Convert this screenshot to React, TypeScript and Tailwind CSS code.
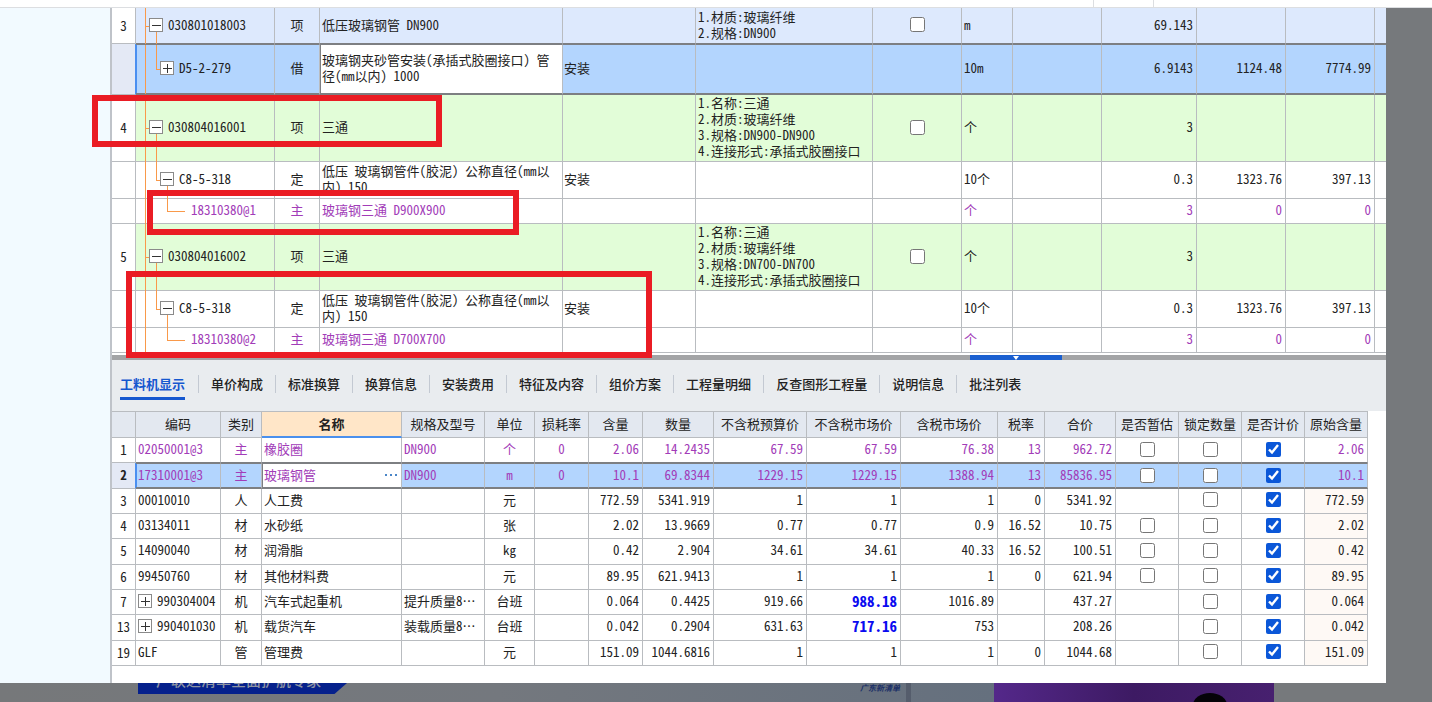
import { useState } from 'react';
import { clsx } from 'clsx';

interface BillRow {
  no?: string;
  level: 1 | 2 | 3;
  code: string;
  open?: boolean;
  kind: string;
  name: string;
  major?: string;
  feature?: string;
  unit: string;
  qty: string;
  price?: string;
  total?: string;
  height: string;
  bg: string;
  selected?: boolean;
  beforeSelected?: boolean;
}

interface ResourceRow {
  no: string;
  code: string;
  expandable?: boolean;
  kind: string;
  name: string;
  spec?: string;
  unit: string;
  loss?: string;
  content: string;
  qty: string;
  budget: string;
  market: string;
  taxMarket: string;
  rate?: string;
  total: string;
  estimate: boolean;
  origin: string;
  purple?: boolean;
  selected?: boolean;
  beforeSelected?: boolean;
  changed?: boolean;
}

const billCols = [
  'w-[24px]', 'w-[139px]', 'w-[45px]', 'w-[243px]', 'w-[133px]', 'w-[177px]', 'w-[89px]',
  'w-[51px]', 'w-[89px]', 'w-[95px]', 'w-[89px]', 'w-[89px]', 'w-[11px]',
];

const GREEN = 'bg-[#e2fdd8]';

const billRows: BillRow[] = [
  {
    no: '3', level: 1, code: '030801018003', open: true, kind: '项', name: '低压玻璃钢管 DN900',
    feature: '1.材质:玻璃纤维\n2.规格:DN900', unit: 'm', qty: '69.143',
    height: 'h-[36px]', bg: 'bg-[#dde9fd]', beforeSelected: true,
  },
  {
    level: 2, code: 'D5-2-279', open: false, kind: '借', name: '玻璃钢夹砂管安装(承插式胶圈接口) 管径(mm以内) 1000',
    major: '安装', unit: '10m', qty: '6.9143', price: '1124.48', total: '7774.99',
    height: 'h-[51px]', bg: 'bg-[#b3d5fe]', selected: true,
  },
  {
    no: '4', level: 1, code: '030804016001', open: true, kind: '项', name: '三通',
    feature: '1.名称:三通\n2.材质:玻璃纤维\n3.规格:DN900-DN900\n4.连接形式:承插式胶圈接口',
    unit: '个', qty: '3', height: 'h-[67px]', bg: GREEN,
  },
  {
    level: 2, code: 'C8-5-318', open: true, kind: '定', name: '低压 玻璃钢管件(胶泥) 公称直径(mm以内) 150',
    major: '安装', unit: '10个', qty: '0.3', price: '1323.76', total: '397.13',
    height: 'h-[37px]', bg: 'bg-white',
  },
  {
    level: 3, code: '18310380@1', kind: '主', name: '玻璃钢三通 D900X900', unit: '个',
    qty: '3', price: '0', total: '0', height: 'h-[25px]', bg: 'bg-white',
  },
  {
    no: '5', level: 1, code: '030804016002', open: true, kind: '项', name: '三通',
    feature: '1.名称:三通\n2.材质:玻璃纤维\n3.规格:DN700-DN700\n4.连接形式:承插式胶圈接口',
    unit: '个', qty: '3', height: 'h-[67px]', bg: GREEN,
  },
  {
    level: 2, code: 'C8-5-318', open: true, kind: '定', name: '低压 玻璃钢管件(胶泥) 公称直径(mm以内) 150',
    major: '安装', unit: '10个', qty: '0.3', price: '1323.76', total: '397.13',
    height: 'h-[37px]', bg: 'bg-white',
  },
  {
    level: 3, code: '18310380@2', kind: '主', name: '玻璃钢三通 D700X700', unit: '个',
    qty: '3', price: '0', total: '0', height: 'h-[25px]', bg: 'bg-white',
  },
];

const tabs = [
  '工料机显示', '单价构成', '标准换算', '换算信息', '安装费用', '特征及内容',
  '组价方案', '工程量明细', '反查图形工程量', '说明信息', '批注列表',
];

const resourceCols = [
  { title: '', width: 'w-[24px]' },
  { title: '编码', width: 'w-[85px]' },
  { title: '类别', width: 'w-[41px]' },
  { title: '名称', width: 'w-[140px]' },
  { title: '规格及型号', width: 'w-[83px]' },
  { title: '单位', width: 'w-[50px]' },
  { title: '损耗率', width: 'w-[54px]' },
  { title: '含量', width: 'w-[54px]' },
  { title: '数量', width: 'w-[71px]' },
  { title: '不含税预算价', width: 'w-[93px]' },
  { title: '不含税市场价', width: 'w-[94px]' },
  { title: '含税市场价', width: 'w-[97px]' },
  { title: '税率', width: 'w-[47px]' },
  { title: '合价', width: 'w-[71px]' },
  { title: '是否暂估', width: 'w-[63px]' },
  { title: '锁定数量', width: 'w-[63px]' },
  { title: '是否计价', width: 'w-[63px]' },
  { title: '原始含量', width: 'w-[63px]' },
];

const resourceRows: ResourceRow[] = [
  { no: '1', code: '02050001@3', kind: '主', name: '橡胶圈', spec: 'DN900', unit: '个', loss: '0', content: '2.06', qty: '14.2435', budget: '67.59', market: '67.59', taxMarket: '76.38', rate: '13', total: '962.72', estimate: true, origin: '2.06', purple: true, beforeSelected: true },
  { no: '2', code: '17310001@3', kind: '主', name: '玻璃钢管', spec: 'DN900', unit: 'm', loss: '0', content: '10.1', qty: '69.8344', budget: '1229.15', market: '1229.15', taxMarket: '1388.94', rate: '13', total: '85836.95', estimate: true, origin: '10.1', purple: true, selected: true },
  { no: '3', code: '00010010', kind: '人', name: '人工费', unit: '元', content: '772.59', qty: '5341.919', budget: '1', market: '1', taxMarket: '1', rate: '0', total: '5341.92', estimate: false, origin: '772.59' },
  { no: '4', code: '03134011', kind: '材', name: '水砂纸', unit: '张', content: '2.02', qty: '13.9669', budget: '0.77', market: '0.77', taxMarket: '0.9', rate: '16.52', total: '10.75', estimate: true, origin: '2.02' },
  { no: '5', code: '14090040', kind: '材', name: '润滑脂', unit: 'kg', content: '0.42', qty: '2.904', budget: '34.61', market: '34.61', taxMarket: '40.33', rate: '16.52', total: '100.51', estimate: true, origin: '0.42' },
  { no: '6', code: '99450760', kind: '材', name: '其他材料费', unit: '元', content: '89.95', qty: '621.9413', budget: '1', market: '1', taxMarket: '1', rate: '0', total: '621.94', estimate: true, origin: '89.95' },
  { no: '7', code: '990304004', expandable: true, kind: '机', name: '汽车式起重机', spec: '提升质量8⋯', unit: '台班', content: '0.064', qty: '0.4425', budget: '919.66', market: '988.18', taxMarket: '1016.89', total: '437.27', estimate: false, origin: '0.064', changed: true },
  { no: '13', code: '990401030', expandable: true, kind: '机', name: '载货汽车', spec: '装载质量8⋯', unit: '台班', content: '0.042', qty: '0.2904', budget: '631.63', market: '717.16', taxMarket: '753', total: '208.26', estimate: false, origin: '0.042', changed: true },
  { no: '19', code: 'GLF', kind: '管', name: '管理费', unit: '元', content: '151.09', qty: '1044.6816', budget: '1', market: '1', taxMarket: '1', rate: '0', total: '1044.68', estimate: false, origin: '151.09' },
];

function Toggle({ open, label }: { open?: boolean; label: string }) {
  return (
    <button type="button" aria-label={label} className="relative size-[14px] shrink-0 border border-[#8a8a8a] bg-white">
      <svg viewBox="0 0 12 12" className="block size-[12px]" stroke="#333" strokeWidth="1" fill="none">
        <path d="M2 6.5h9" />
        {!open && <path d="M6.5 2v9" />}
      </svg>
    </button>
  );
}

function Check({ label, checked }: { label: string; checked?: boolean }) {
  return (
    <input
      type="checkbox"
      aria-label={label}
      defaultChecked={checked}
      className="mx-auto block size-[15px] accent-[#0b57d8]"
    />
  );
}

function TreeCell({ row }: { row: BillRow }) {
  const line = 'absolute bg-[#f9994a]';
  return (
    <>
      {/* Trunk and branch guides */}
      <span className={clsx(line, 'left-[9px] top-0 -bottom-px w-px')} />
      {row.level === 1 && (
        <>
          <span className={clsx(line, 'left-[9px] top-1/2 h-px w-[4px]')} />
          <span className={clsx(line, 'left-[20px] top-1/2 -bottom-px w-px')} />
        </>
      )}
      {row.level === 2 && (
        <>
          <span className={clsx(line, 'left-[20px] top-0 bottom-1/2 w-px')} />
          <span className={clsx(line, 'left-[20px] top-1/2 h-px w-[4px]')} />
          {row.open && <span className={clsx(line, 'left-[31px] top-1/2 -bottom-px w-px')} />}
        </>
      )}
      {row.level === 3 && (
        <>
          <span className={clsx(line, 'left-[31px] top-0 bottom-1/2 w-px')} />
          <span className={clsx(line, 'left-[31px] top-1/2 h-px w-[18px]')} />
        </>
      )}
      <div
        className={clsx(
          'flex items-center gap-[5px]',
          row.level === 1 && 'pl-[13px]',
          row.level === 2 && 'pl-[24px]',
          row.level === 3 && 'pl-[55px]',
        )}
      >
        {row.level < 3 && <Toggle open={row.open} label={`展开 ${row.code}`} />}
        <span>{row.code}</span>
      </div>
    </>
  );
}

function BillTable() {
  return (
    <table className="w-full table-fixed border-separate border-spacing-0">
      <colgroup>
        {billCols.map((w, i) => (
          <col key={i} className={w} />
        ))}
      </colgroup>
      <tbody>
        {billRows.map((row, i) => {
          const cell = clsx(
            'border-r border-r-[#b9bcc0] p-0 pb-[2px]',
            row.bg,
            row.selected && 'border-t border-b-2 border-t-[#7d7f82] border-b-[#7d7f82]',
            row.beforeSelected && 'border-b border-b-[#7d7f82]',
            !row.selected && !row.beforeSelected && 'border-b border-b-[#b9bcc0]',
          );
          return (
            <tr key={i} className={clsx(row.height, row.level === 3 ? 'text-[#a23cb8]' : 'text-[#222]')}>
              <td
                className={clsx(
                  'border-r border-b border-b-[#b9bcc0] p-0 text-center',
                  row.selected ? 'border-r-[#4a8ff0] bg-[#e4e9f5]' : 'border-r-[#b9bcc0] bg-white',
                )}
              >
                {row.no}
              </td>
              <td className={clsx(cell, 'relative', row.selected && 'shadow-[inset_1px_0_0_#4a8ff0]')}>
                <TreeCell row={row} />
              </td>
              <td className={clsx(cell, 'text-center')}>{row.kind}</td>
              <td
                className={clsx(
                  cell,
                  row.selected ? 'border-l border-l-[#7d7f82] border-r-[#7d7f82] bg-white pl-px' : 'pl-[2px]',
                )}
              >
                {row.name}
              </td>
              <td className={clsx(cell, 'pl-px')}>{row.major}</td>
              <td className={clsx(cell, 'pl-[2px] whitespace-pre')}>{row.feature}</td>
              <td className={cell}>{row.level === 1 && <Check label={`主要清单 ${row.code}`} />}</td>
              <td className={clsx(cell, 'pl-[2px]')}>{row.unit}</td>
              <td className={cell} />
              <td className={clsx(cell, 'pr-[3px] text-right')}>{row.qty}</td>
              <td className={clsx(cell, 'pr-[3px] text-right')}>{row.price}</td>
              <td className={clsx(cell, 'pr-[3px] text-right')}>{row.total}</td>
              <td className={clsx(cell, 'border-r-0')} />
            </tr>
          );
        })}
      </tbody>
    </table>
  );
}

function ResourceTable() {
  return (
    <table className="h-[255px] w-full table-fixed border-separate border-spacing-0 whitespace-nowrap">
      <colgroup>
        {resourceCols.map((c, i) => (
          <col key={i} className={c.width} />
        ))}
      </colgroup>
      <thead>
        <tr className="h-[27px]">
          {resourceCols.map((c, i) => (
            <th
              key={i}
              className={clsx(
                'border-t border-r border-[#b9bcc0] p-0',
                c.title === '名称'
                  ? 'border-b-2 border-b-[#4a90ee] bg-[#ffe6c8] pb-px font-bold'
                  : 'border-b bg-[#e3e8f0] pb-[2px] font-normal',
              )}
            >
              {c.title}
            </th>
          ))}
        </tr>
      </thead>
      <tbody>
        {resourceRows.map((row) => {
          const cell = clsx(
            'border-r border-r-[#b9bcc0] p-0',
            row.selected
              ? 'border-t border-b-2 border-t-[#7d7f82] border-b-[#7d7f82] bg-[#b3d5fe]'
              : 'border-b pb-[2px]',
            row.beforeSelected ? 'border-b-[#7d7f82]' : !row.selected && 'border-b-[#b9bcc0]',
          );
          const num = clsx(cell, 'pr-[3px] text-right');
          return (
            <tr key={row.no} className={clsx('h-[25px]', row.purple ? 'text-[#a23cb8]' : 'text-[#222]')}>
              <td
                className={clsx(
                  'border-r border-b border-b-[#b9bcc0] p-0 text-center text-[#222]',
                  row.selected ? 'border-r-[#4a8ff0] bg-[#e4e9f5] font-bold' : 'border-r-[#b9bcc0]',
                )}
              >
                {row.no}
              </td>
              <td className={clsx(cell, 'pl-[2px]', row.selected && 'shadow-[inset_1px_0_0_#4a8ff0]')}>
                <div className="flex items-center gap-[5px]">
                  {row.expandable && <Toggle label={`展开 ${row.code}`} />}
                  {row.code}
                </div>
              </td>
              <td className={clsx(cell, 'text-center')}>{row.kind}</td>
              <td
                className={clsx(
                  cell,
                  row.selected ? 'border-l border-l-[#7d7f82] border-r-[#7d7f82] bg-white pl-px' : 'pl-[2px]',
                )}
              >
                <div className="flex items-center justify-between pr-[4px]">
                  {row.name}
                  {row.selected && (
                    <button type="button" aria-label="更多">
                      <svg viewBox="0 0 12 2" className="h-[2px] w-[12px]" fill="#4a86c8">
                        <path d="M0 0h2v2H0zM5 0h2v2H5zM10 0h2v2h-2z" />
                      </svg>
                    </button>
                  )}
                </div>
              </td>
              <td className={clsx(cell, 'pl-[2px]')}>{row.spec}</td>
              <td className={clsx(cell, 'text-center')}>{row.unit}</td>
              <td className={clsx(cell, 'text-center')}>{row.loss}</td>
              <td className={num}>{row.content}</td>
              <td className={num}>{row.qty}</td>
              <td className={num}>{row.budget}</td>
              <td className={clsx(num, row.changed && 'text-[15px] leading-[16px] font-bold text-[#0a0af0]')}>{row.market}</td>
              <td className={num}>{row.taxMarket}</td>
              <td className={num}>{row.rate}</td>
              <td className={num}>{row.total}</td>
              <td className={cell}>{row.estimate && <Check label={`是否暂估 ${row.code}`} />}</td>
              <td className={cell}>
                <Check label={`锁定数量 ${row.code}`} />
              </td>
              <td className={cell}>
                <Check label={`是否计价 ${row.code}`} checked />
              </td>
              <td className={clsx(num, !row.selected && !row.purple && 'bg-[#fef9f5]', row.selected && 'border-r-[#7d7f82]')}>
                {row.origin}
              </td>
            </tr>
          );
        })}
      </tbody>
    </table>
  );
}

function Tabs() {
  const [active, setActive] = useState(tabs[0]);
  return (
    <nav className="flex h-[51px] items-center bg-[#e9ecef] pb-[4px] pl-[8px]">
      {tabs.map((tab, i) => (
        <div key={tab} className="flex items-center">
          {i > 0 && <span className="h-[18px] w-px bg-[#c3c9d2]" />}
          <button
            type="button"
            onClick={() => setActive(tab)}
            className={clsx(
              'relative whitespace-nowrap',
              i === 0 ? 'mr-[13px]' : 'mx-[12px]',
              active === tab ? 'font-bold text-[#1557cf]' : 'font-medium text-[#222]',
            )}
          >
            {tab}
            {active === tab && <span className="absolute inset-x-0 -bottom-[8px] h-[3px] bg-[#1557cf]" />}
          </button>
        </div>
      ))}
    </nav>
  );
}

function PageBehind() {
  return (
    <div className="flex h-[19px] overflow-hidden bg-[#76797c]">
      <div className="flex min-w-0 flex-1 bg-gradient-to-r from-[#76787a] via-[#74787e] to-[#65707e] pl-[138px]">
        <div className="flex h-[11px] w-[209px] items-end overflow-hidden bg-[#06218c] pb-[6px] pl-[18px] [clip-path:polygon(0_0,100%_0,94%_100%,0_100%)]">
          <span className="text-[15px] leading-[16px] font-medium whitespace-nowrap text-[#8d93a3]">广联达清单全面护航专家</span>
        </div>
        <div className="ml-auto flex">
          <span className="mr-[6px] text-[8px] leading-[10px] font-bold text-[#1a2f66] italic">广东新清单</span>
          <span className="mr-[83px] w-[5px] bg-[#555d6c]" />
        </div>
      </div>
      <div className="flex w-[280px] items-end justify-end bg-gradient-to-r from-[#54288a] via-[#3d1a63] to-[#47206f] pr-[47px]">
        <svg viewBox="0 0 34 9" className="h-[9px] w-[34px]">
          <ellipse cx="17" cy="12" rx="17" ry="12" fill="#050308" />
        </svg>
      </div>
      <div className="w-[158px]" />
    </div>
  );
}

export default function App() {
  return (
    <div
      lang="zh-CN"
      className="flex min-h-screen flex-col bg-[#76797c] font-['Noto_Sans_CJK_SC',sans-serif] text-[13px] leading-[16px] text-[#222] [font-feature-settings:'hwid']"
    >
      <header className="flex h-[8px] justify-end border-b border-[#dcdee1] bg-white pr-[278px]">
        <div className="w-[61px] border-x border-[#dcdee1]" />
      </header>

      <div className="relative flex flex-1 pr-[46px]">
        <aside className="w-[110px] shrink-0 bg-[#f2faff]" />
        <main className="min-w-0 flex-1 border-l-2 border-[#bfc3c9] bg-white">
          <BillTable />

          {/* Splitter between the two panes */}
          <div className="mt-[2px] flex h-[5px] bg-[#a3a4a6]">
            <button type="button" aria-label="折叠" className="mr-[324px] ml-auto flex h-[5px] w-[92px] justify-center bg-[#1a5fd0]">
              <svg viewBox="0 0 6 5" className="h-[5px] w-[6px]" fill="#fff">
                <path d="M0 1h6L3 5z" />
              </svg>
            </button>
          </div>

          <Tabs />
          <div className="pr-[18px]">
            <ResourceTable />
          </div>
        </main>

        {/* Red markup over the bill */}
        <div className="pointer-events-none absolute top-[87px] left-[92px] h-[52px] w-[350px] border-6 border-[#ea1c24]" />
        <div className="pointer-events-none absolute top-[182px] left-[147px] h-[45px] w-[372px] border-6 border-[#ea1c24]" />
        <div className="pointer-events-none absolute top-[263px] left-[126px] h-[87px] w-[526px] border-6 border-[#ea1c24]" />
      </div>

      <PageBehind />
    </div>
  );
}
